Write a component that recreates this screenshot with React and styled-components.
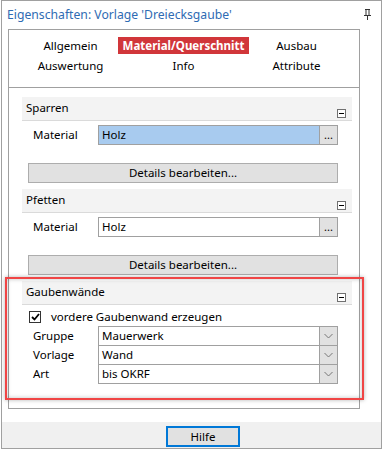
import React from 'react';
import styled, { createGlobalStyle } from 'styled-components';

const GlobalStyle = createGlobalStyle`
  body {
    margin: 0;
    background: #ffffff;
    font-family: 'Noto Sans', 'Open Sans', sans-serif;
    font-size: 11.5px;
    color: #000;
  }
`;

const Window = styled.div`
  box-sizing: border-box;
  margin-left: 1px;
  width: 381px;
  height: 449px;
  border: 1px solid #a0a0a0;
  background: #fff;
  display: flex;
  flex-direction: column;
`;

const TitleBar = styled.div`
  height: 26px;
  display: flex;
  align-items: center;
  justify-content: space-between;
  padding: 0 10px 2px 5px;
  color: #2f6bb3;
  font-size: 12.2px;
`;

const Panel = styled.div`
  box-sizing: border-box;
  margin-left: 6px;
  width: 352px;
  height: 380px;
  border: 1px solid #a0a0a0;
  display: flex;
  flex-direction: column;
`;

const Tabs = styled.div`
  box-sizing: border-box;
  height: 58px;
  border-bottom: 1px solid #a0a0a0;
  display: grid;
  grid-template-columns: repeat(3, 113px);
  grid-auto-rows: 19.5px;
  padding: 6px 0 0 5px;
`;

const Tab = styled.div`
  justify-self: center;
  align-self: center;
  padding: 0 5px;
  height: 17px;
  line-height: 17px;
  white-space: nowrap;
  background: ${(p) => (p.active ? '#d1363a' : 'transparent')};
  color: ${(p) => (p.active ? '#fff' : '#000')};
  font-weight: ${(p) => (p.active ? 700 : 400)};
`;

const Content = styled.div`
  padding: 9px 7px 0 13px;
  display: flex;
  flex-direction: column;
`;

const Section = styled.div`
  position: relative;
  margin-bottom: ${(p) => p.gap || 0}px;
`;

const SectionHeader = styled.div`
  height: 23px;
  background: #f3f3f3;
  border-bottom: 1px solid #dadada;
  display: flex;
  justify-content: space-between;
  padding: 0 6px 0 4px;
  line-height: 22px;
`;

const Collapse = styled.span`
  box-sizing: border-box;
  width: 9px;
  height: 9px;
  margin-top: 12px;
  border: 1px solid #707070;
  background: #fff;
  position: relative;
  &::after {
    content: '';
    position: absolute;
    left: 1px;
    right: 1px;
    top: 3px;
    height: 1px;
    background: #000;
  }
`;

const Body = styled.div`
  padding: ${(p) => (p.flush ? 0 : 4)}px 14px 0 11px;
  display: flex;
  flex-direction: column;
`;

const Row = styled.div`
  display: flex;
  align-items: center;
  height: 20px;
  & + & {
    margin-top: -1px;
  }
`;

const Label = styled.span`
  width: 65px;
  flex: none;
  line-height: 16px;
`;

const Field = styled.div`
  flex: 1;
  box-sizing: border-box;
  height: 20px;
  border: 1px solid #a0a0a0;
  background: ${(p) => (p.selected ? '#a8cbef' : '#fff')};
  display: flex;
  align-items: stretch;
`;

const FieldText = styled.span`
  flex: 1;
  padding-left: 3px;
  line-height: 18px;
`;

const FieldButton = styled.span`
  width: 17px;
  flex: none;
  border-left: 1px solid #a0a0a0;
  background: #e1e1e1;
  display: flex;
  align-items: center;
  justify-content: center;
  font-size: 11px;
  line-height: 14px;
  color: #000;
`;

const WideButton = styled.div`
  box-sizing: border-box;
  height: 20px;
  margin: 18px 14px 0 6px;
  border: 1px solid #adadad;
  background: #e1e1e1;
  text-align: center;
  line-height: 18px;
`;

const CheckRow = styled.div`
  display: flex;
  align-items: center;
  height: 15px;
  margin: 4px 0 2px 7px;
  gap: 10px;
`;

const CheckBox = styled.span`
  box-sizing: border-box;
  width: 12px;
  height: 12px;
  border: 1px solid #333;
  display: flex;
  align-items: center;
  justify-content: center;
`;

const Highlight = styled.div`
  position: absolute;
  left: -17px;
  top: -4px;
  width: 359px;
  height: 123px;
  box-sizing: border-box;
  border: 2px solid #f04545;
  box-shadow: 0 0 4px rgba(0, 0, 0, 0.3), inset 0 0 4px rgba(0, 0, 0, 0.25);
  pointer-events: none;
`;

const Footer = styled.div`
  box-sizing: border-box;
  margin-top: auto;
  height: 26px;
  background: #f0f0f0;
  display: flex;
  padding: 4px 0 0 164px;
`;

const HelpButton = styled.div`
  box-sizing: border-box;
  width: 74px;
  height: 21px;
  border: 2px solid #0078d7;
  background: #e1e1e1;
  text-align: center;
  line-height: 17px;
`;

const Pin = () => (
  <svg width="7" height="11" viewBox="0 0 7 11">
    <path d="M1 0.5h5M2 0.5v6M5 0.5v6M0 6.5h7M3.5 6.5v4.5" fill="none" stroke="#333" strokeWidth="1" />
  </svg>
);

const Chevron = () => (
  <svg width="9" height="6" viewBox="0 0 9 6">
    <path d="M0.5 1l4 4 4-4" fill="none" stroke="#777" strokeWidth="1" />
  </svg>
);

const Check = () => (
  <svg width="9" height="8" viewBox="0 0 9 8">
    <path d="M1 4l2.5 2.5L8 1" fill="none" stroke="#000" strokeWidth="1.8" />
  </svg>
);

const tabs = [
  ['Allgemein', false],
  ['Material/Querschnitt', true],
  ['Ausbau', false],
  ['Auswertung', false],
  ['Info', false],
  ['Attribute', false],
];

const MaterialSection = ({ title, selected }) => (
  <Section gap={6}>
    <SectionHeader>
      <span>{title}</span>
      <Collapse />
    </SectionHeader>
    <Body>
      <Row>
        <Label>Material</Label>
        <Field selected={selected}>
          <FieldText>Holz</FieldText>
          <FieldButton>...</FieldButton>
        </Field>
      </Row>
    </Body>
    <WideButton>Details bearbeiten...</WideButton>
  </Section>
);

const combos = [
  ['Gruppe', 'Mauerwerk'],
  ['Vorlage', 'Wand'],
  ['Art', 'bis OKRF'],
];

export default function App() {
  return (
    <>
      <GlobalStyle />
      <Window>
        <TitleBar>
          <span>Eigenschaften: Vorlage 'Dreiecksgaube'</span>
          <Pin />
        </TitleBar>
        <Panel>
          <Tabs>
            {tabs.map(([name, active]) => (
              <Tab key={name} active={active}>
                {name}
              </Tab>
            ))}
          </Tabs>
          <Content>
            <MaterialSection title="Sparren" selected />
            <MaterialSection title="Pfetten" />
            <Section>
              <SectionHeader>
                <span>Gaubenwände</span>
                <Collapse />
              </SectionHeader>
              <CheckRow>
                <CheckBox>
                  <Check />
                </CheckBox>
                <span>vordere Gaubenwand erzeugen</span>
              </CheckRow>
              <Body flush>
                {combos.map(([label, value]) => (
                  <Row key={label}>
                    <Label>{label}</Label>
                    <Field>
                      <FieldText>{value}</FieldText>
                      <FieldButton>
                        <Chevron />
                      </FieldButton>
                    </Field>
                  </Row>
                ))}
              </Body>
              <Highlight />
            </Section>
          </Content>
        </Panel>
        <Footer>
          <HelpButton>Hilfe</HelpButton>
        </Footer>
      </Window>
    </>
  );
}
